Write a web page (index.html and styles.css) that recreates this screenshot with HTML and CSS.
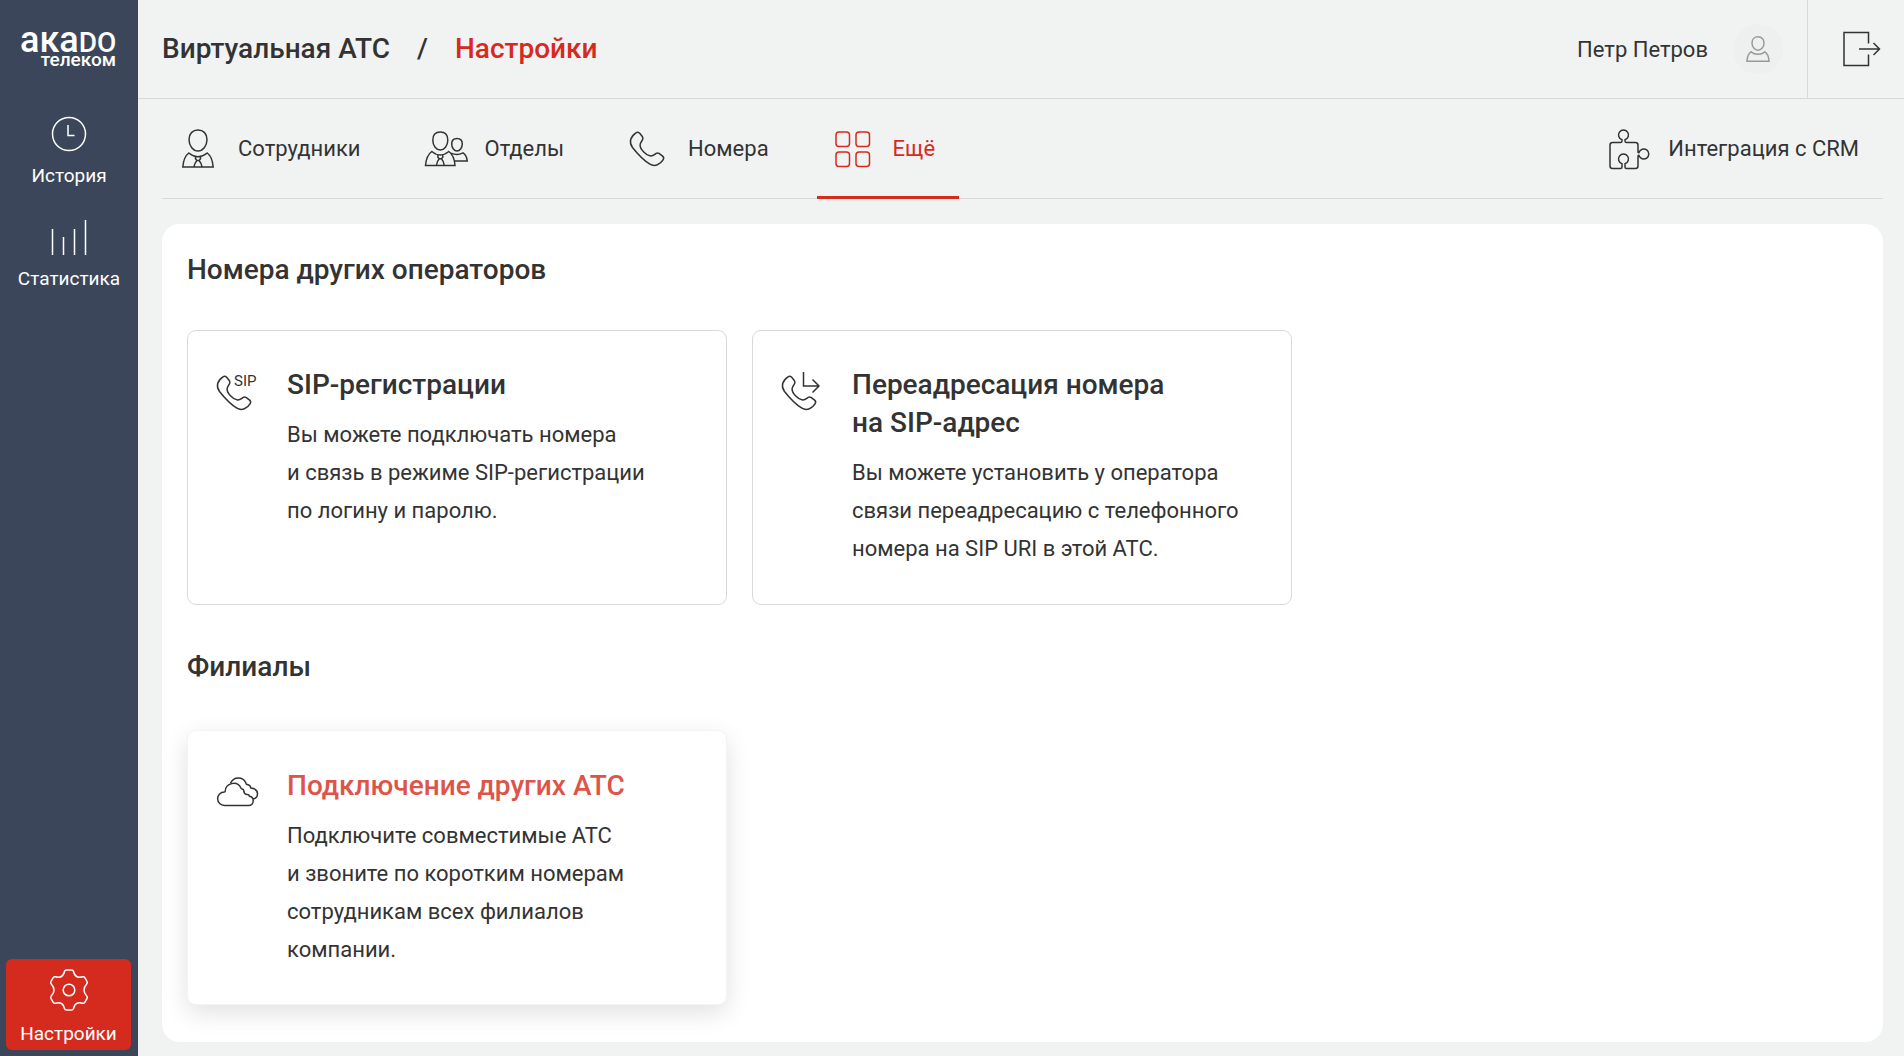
FILE: index.html
```html
<!DOCTYPE html>
<html lang="ru">
<head>
  <meta charset="utf-8">
  <meta name="viewport" content="width=device-width, initial-scale=1">
  <title>Виртуальная АТС / Настройки</title>
  <link rel="stylesheet" href="styles.css">
</head>
<body>
  <aside class="sidebar">
    <a class="logo" href="#" aria-label="Акадо Телеком">
      <svg width="98" height="42" viewBox="0 0 98 42">
        <text class="logo__name" x="0" y="24"><tspan font-size="36">ака</tspan><tspan font-size="28">DO</tspan></text>
        <text class="logo__sub" x="96" y="38" text-anchor="end">телеком</text>
      </svg>
    </a>
    <nav class="side-nav">
      <a class="side-link" href="#">
        <svg class="side-link__icon" width="40" height="40" viewBox="0 0 40 40"><circle cx="20" cy="20" r="16.500"/><path d="M19 11v10.500h6.500"/></svg>
        <span>История</span>
      </a>
      <a class="side-link" href="#">
        <svg class="side-link__icon" width="40" height="40" viewBox="0 0 40 40"><path d="M3.500 12v26M14.500 20v18M25.500 12v26M36.500 3v35"/></svg>
        <span>Статистика</span>
      </a>
      <a class="side-link side-link--active" href="#" aria-current="page">
        <svg class="side-link__icon" width="40" height="44" viewBox="0 0 40 44"><circle cx="20" cy="22" r="5.800"/><path d="M17.500 2h5q1.500 0 2 1.500c.8 3 1.500 4.500 3.500 5.300c2 .9 3.500.6 5.500 0q1.500-.4 2.300.8l2.200 3.800q.8 1.300-.3 2.500c-2 2.200-2.700 3.500-2.700 6.100s.7 3.900 2.700 6.100q1.100 1.200.3 2.500l-2.200 3.800q-.8 1.200-2.300.8c-2-.6-3.500-.9-5.500 0c-2 .8-2.700 2.300-3.500 5.300q-.5 1.500-2 1.500h-5q-1.500 0-2-1.500c-.8-3-1.500-4.500-3.500-5.300c-2-.9-3.500-.6-5.500 0q-1.500.4-2.300-.8l-2.200-3.800q-.8-1.300.3-2.500c2-2.200 2.700-3.500 2.700-6.100s-.7-3.900-2.700-6.100q-1.100-1.200-.3-2.500l2.200-3.800q.8-1.200 2.300-.8c2 .6 3.500.9 5.500 0c2-.8 2.700-2.300 3.500-5.300q.5-1.500 2-1.500z"/></svg>
        <span>Настройки</span>
      </a>
    </nav>
  </aside>

  <div class="page">
    <header class="header">
      <nav class="crumbs" aria-label="Навигация">
        <a class="crumbs__link" href="#">Виртуальная АТС</a>
        <span>/</span>
        <a class="crumbs__link crumbs__link--current" href="#">Настройки</a>
      </nav>
      <a class="user" href="#">
        <span>Петр Петров</span>
        <span class="user__avatar">
          <svg width="24" height="26" viewBox="0 0 24 26"><path d="M12 .800c-3.700 0-6 2.600-6 6.200 0 4 2.800 7.200 6 7.200s6-3.200 6-7.200c0-3.600-2.300-6.200-6-6.200zM5 15.800c4 3.300 10 3.300 14 0 2.500 1.700 3.800 5.200 4 9.400H1c.2-4.200 1.500-7.700 4-9.400z"/></svg>
        </span>
      </a>
      <button class="logout" type="button" aria-label="Выйти">
        <svg width="38" height="36" viewBox="0 0 38 36"><path d="M25.500 12.500V1.500H1v33h24.500V23.500M16 18h20.500M30.500 12l6 6-6 6"/></svg>
      </button>
    </header>

    <nav class="tabs" aria-label="Разделы настроек">
      <a class="tab" href="#">
        <svg class="tab__icon" width="40" height="40" viewBox="0 0 40 40"><path d="M20 1c-5.500 0-9 3.800-9 9.500C11 17 15.300 22 20 22s9-5 9-11.500C29 4.800 25.500 1 20 1zM10.800 24c5.800 4.700 12.600 4.700 18.400 0 3.800 2.800 5.500 8 6 14H4.800c.5-6 2.200-11.200 6-14zM17.500 27.800v2l1.400 1.600c-1.700 1.900-2.600 4-3 6.600M22.500 27.800v2l-1.400 1.600c1.700 1.900 2.600 4 3 6.600M18.900 31.400h2.200"/></svg>
        <span>Сотрудники</span>
      </a>
      <a class="tab" href="#">
        <svg class="tab__icon" width="40" height="40" viewBox="0 0 40 40"><path d="M15.300 3c-4.800 0-7.500 3.200-7.500 8.200 0 5.600 3.700 9.900 7.500 9.900s7.500-4.300 7.500-9.900C22.800 6.200 20.100 3 15.300 3zM6.800 22.500c5.300 4.500 11.700 4.500 17 0 3.800 2.700 5.800 8 6.200 14H.5c.5-6 2.500-11.300 6.300-14zM12.900 26.300v2l1.300 1.500c-1.600 1.800-2.500 4.100-2.800 6.700M17.800 26.300v2l-1.300 1.500c1.600 1.800 2.500 4.100 2.800 6.700M14.200 29.800h2.300M32 9.500c-3.200 0-5.300 2.200-5.300 5.600 0 4 2.600 6.900 5.300 6.900s5.300-2.900 5.300-6.900c0-3.400-2.100-5.600-5.300-5.600zM26 24.200c3.500 1.700 8.500 1.600 12-.3 2.800 1.700 3.900 4.200 4.200 8H29.200"/></svg>
        <span>Отделы</span>
      </a>
      <a class="tab" href="#">
        <svg class="tab__icon" width="40" height="40" viewBox="0 0 40 40"><use href="#handset"/></svg>
        <span>Номера</span>
      </a>
      <a class="tab tab--active" href="#" aria-current="page">
        <svg class="tab__icon" width="40" height="40" viewBox="0 0 40 40"><rect x="3" y="3" width="13.500" height="14.500" rx="3"/><rect x="23" y="3" width="13.500" height="14.500" rx="3"/><rect x="3" y="23" width="13.500" height="14.500" rx="3"/><rect x="23" y="23" width="13.500" height="14.500" rx="3"/></svg>
        <span>Ещё</span>
      </a>
      <a class="tab tab--end" href="#">
        <svg class="tab__icon" width="40" height="40" viewBox="0 0 40 40"><path d="M4.500 13.500h8q1.500 0 1.500-1.500v-1.200a5 5 0 1 1 3 0v1.200q0 1.500 1.500 1.500h9q2.500 0 2.500 2.500v7q.2 1 1 .5a5 5 0 1 1 0 3q-.8-.5-1 .5v10q0 2.500-2.500 2.500h-9q-1.500 0-1.500-1.500v-3.200a5 5 0 1 0-3 0v3.200q0 1.500-1.500 1.500h-8q-2.500 0-2.500-2.500v-21q0-2.500 2.500-2.500z"/></svg>
        <span>Интеграция с CRM</span>
      </a>
    </nav>

    <main class="panel">
      <section class="section">
        <h2 class="section__title">Номера других операторов</h2>
        <div class="cards">
          <a class="card" href="#">
            <svg class="card__icon" width="44" height="40" viewBox="0 0 44 40"><use href="#handset" x="-2" y="2"/><text x="17" y="15" font-size="15">SIP</text></svg>
            <div>
              <h3 class="card__title">SIP-регистрации</h3>
              <p class="card__text">Вы можете подключать номера и&nbsp;связь в&nbsp;режиме SIP-регистрации по&nbsp;логину и&nbsp;паролю.</p>
            </div>
          </a>
          <a class="card" href="#">
            <svg class="card__icon" width="44" height="40" viewBox="0 0 44 40"><use href="#handset" x="-2" y="2"/><path d="M21.500 1v14h15.500M30.500 8.500l6.500 6.500-6.500 6.500"/></svg>
            <div>
              <h3 class="card__title">Переадресация номера на&nbsp;SIP-адрес</h3>
              <p class="card__text">Вы можете установить у&nbsp;оператора связи переадресацию с&nbsp;телефонного номера на&nbsp;SIP URI в&nbsp;этой АТС.</p>
            </div>
          </a>
        </div>
      </section>

      <section class="section section--branches">
        <h2 class="section__title">Филиалы</h2>
        <div class="cards">
          <a class="card card--raised" href="#">
            <svg class="card__icon" width="44" height="40" viewBox="0 0 44 40"><path d="M7.500 34.500a6.800 6.800 0 0 1-.2-13.600q.6-.1.900-.6a8.300 8.300 0 0 1 15.700-3.300q.4.800 1.200 1l.5.200q.8.300 1.100 1.100.4 3.700 3 4.200c2.500-.2 2.500.7 2.800 1.800 3 .5 3.700 2.500 3.700 4.400 0 2.700-1.900 4.800-4.700 4.800zM13.500 12.200c3.300-7 12.300-6.500 15.200-.6l.6 1.600c2.600.4 4.300 1.300 4.500 3.900 4 .4 6.700 2.200 6.700 5.700 0 3-1.900 5-5 5.300"/></svg>
            <div>
              <h3 class="card__title">Подключение других АТС</h3>
              <p class="card__text">Подключите совместимые АТС и&nbsp;звоните по&nbsp;коротким номерам сотрудникам всех филиалов компании.</p>
            </div>
          </a>
        </div>
      </section>
    </main>
  </div>

  <svg class="symbols" aria-hidden="true">
    <defs>
      <path id="handset" d="M8 3.800q1.900-1.200 3.700.5l2.600 3.200q1.100 1.500.3 3.200c-1 2-2.300 3-2.500 5-.3 4.300 5.800 10.600 10.400 11.300 2.500.2 4.200-1.700 5.700-2.700q1.400-.7 2.800.1l3.600 2.700q1.800 1.700.6 3.600c-2.700 4.500-8.300 7.600-13.300 4.500C15.500 31.300 10 25.500 4.500 18.500 .5 13 2.500 7.600 8 3.800z"/>
    </defs>
  </svg>
</body>
</html>
```
FILE: styles.css
```css
* {
  box-sizing: border-box;
}

body {
  display: flex;
  min-height: 100vh;
  margin: 0;
  background: #f1f3f3;
  color: #333;
  font-family: Roboto, "Noto Sans", sans-serif;
  font-size: 22px;
}

a {
  color: inherit;
  text-decoration: none;
}

h2,
h3,
p {
  margin: 0;
}

svg {
  display: block;
  flex: none;
  overflow: visible;
  fill: none;
  stroke: currentColor;
  stroke-width: 1.500;
}

svg text {
  fill: currentColor;
  stroke: none;
}

.symbols {
  position: absolute;
  width: 0;
  height: 0;
}

/* Sidebar */

.sidebar {
  position: sticky;
  top: 0;
  display: flex;
  flex: none;
  flex-direction: column;
  width: 138px;
  height: 100vh;
  padding: 28px 6px 6px;
  background: #3c465a;
  color: #fff;
}

.logo {
  align-self: center;
}

.logo__name,
.logo__sub {
  font-weight: 500;
}

.logo__sub {
  font-size: 19px;
}

.side-nav {
  display: flex;
  flex: 1;
  flex-direction: column;
  gap: 12px;
  margin-top: 36px;
}

.side-link {
  display: flex;
  flex-direction: column;
  align-items: center;
  gap: 8px;
  padding: 8px 0;
  border-radius: 6px;
  font-size: 19px;
  line-height: 27px;
}

.side-link--active {
  margin-top: auto;
  margin-right: 1px;
  padding: 9px 0 3px;
  background: #d52b1e;
}

/* Header */

.page {
  flex: 1;
  min-width: 0;
  padding-bottom: 14px;
}

.header {
  display: flex;
  align-items: stretch;
  height: 99px;
  padding-left: 24px;
  border-bottom: 1px solid #d8dada;
}

.crumbs {
  display: flex;
  flex: 1;
  align-items: center;
  gap: 27px;
  padding-bottom: 2px;
  font-size: 28px;
  font-weight: 500;
}

.crumbs__link--current {
  color: #d52b1e;
}

.user {
  display: flex;
  align-items: center;
  gap: 25px;
  padding-right: 24px;
}

.user__avatar {
  display: flex;
  align-items: center;
  justify-content: center;
  width: 50px;
  height: 50px;
  border-radius: 50%;
  background: #eeefef;
  color: #999;
}

.logout {
  display: flex;
  align-items: center;
  justify-content: center;
  width: 97px;
  padding: 0 0 0 12px;
  border: 0;
  border-left: 1px solid #d8dada;
  background: none;
  color: #333;
  cursor: pointer;
}

/* Tabs */

.tabs {
  display: flex;
  gap: 24px;
  height: 100px;
  margin: 0 21px 0 24px;
  border-bottom: 1px solid #d8dada;
}

.tab {
  display: flex;
  align-items: center;
  gap: 20px;
  margin-bottom: -1px;
  padding: 3px 24px 0 16px;
  border-bottom: 3px solid transparent;
}

.tab span {
  padding-bottom: 2px;
}

.tab--active {
  border-bottom-color: #d52b1e;
  color: #d52b1e;
}

.tab--end {
  margin-left: auto;
}

/* Content */

.panel {
  margin: 25px 21px 0 24px;
  padding: 26px 25px 37px;
  border-radius: 18px;
  background: #fff;
}

.section__title {
  margin-bottom: 40px;
  font-size: 28px;
  font-weight: 500;
  line-height: 40px;
}

.section--branches {
  margin-top: 42px;
}

.section--branches .section__title {
  margin-bottom: 43px;
}

.cards {
  display: grid;
  grid-template-columns: repeat(auto-fill, 540px);
  gap: 25px;
}

.card {
  display: flex;
  gap: 26px;
  min-height: 275px;
  padding: 35px 47px 34px 29px;
  border: 1px solid #d8dada;
  border-radius: 9px;
  background: #fff;
}

.card--raised {
  padding-top: 36px;
  border-color: #f4f4f4;
  box-shadow: 0 8px 24px rgba(0, 0, 0, 0.12);
}

.card__icon {
  margin-top: 5px;
}

.card--raised .card__icon {
  margin-top: 4px;
}

.card__title {
  margin-bottom: 12px;
  font-size: 28px;
  font-weight: 500;
  line-height: 38px;
}

.card--raised .card__title {
  color: #dd5449;
}

.card__text {
  line-height: 38px;
}
```
